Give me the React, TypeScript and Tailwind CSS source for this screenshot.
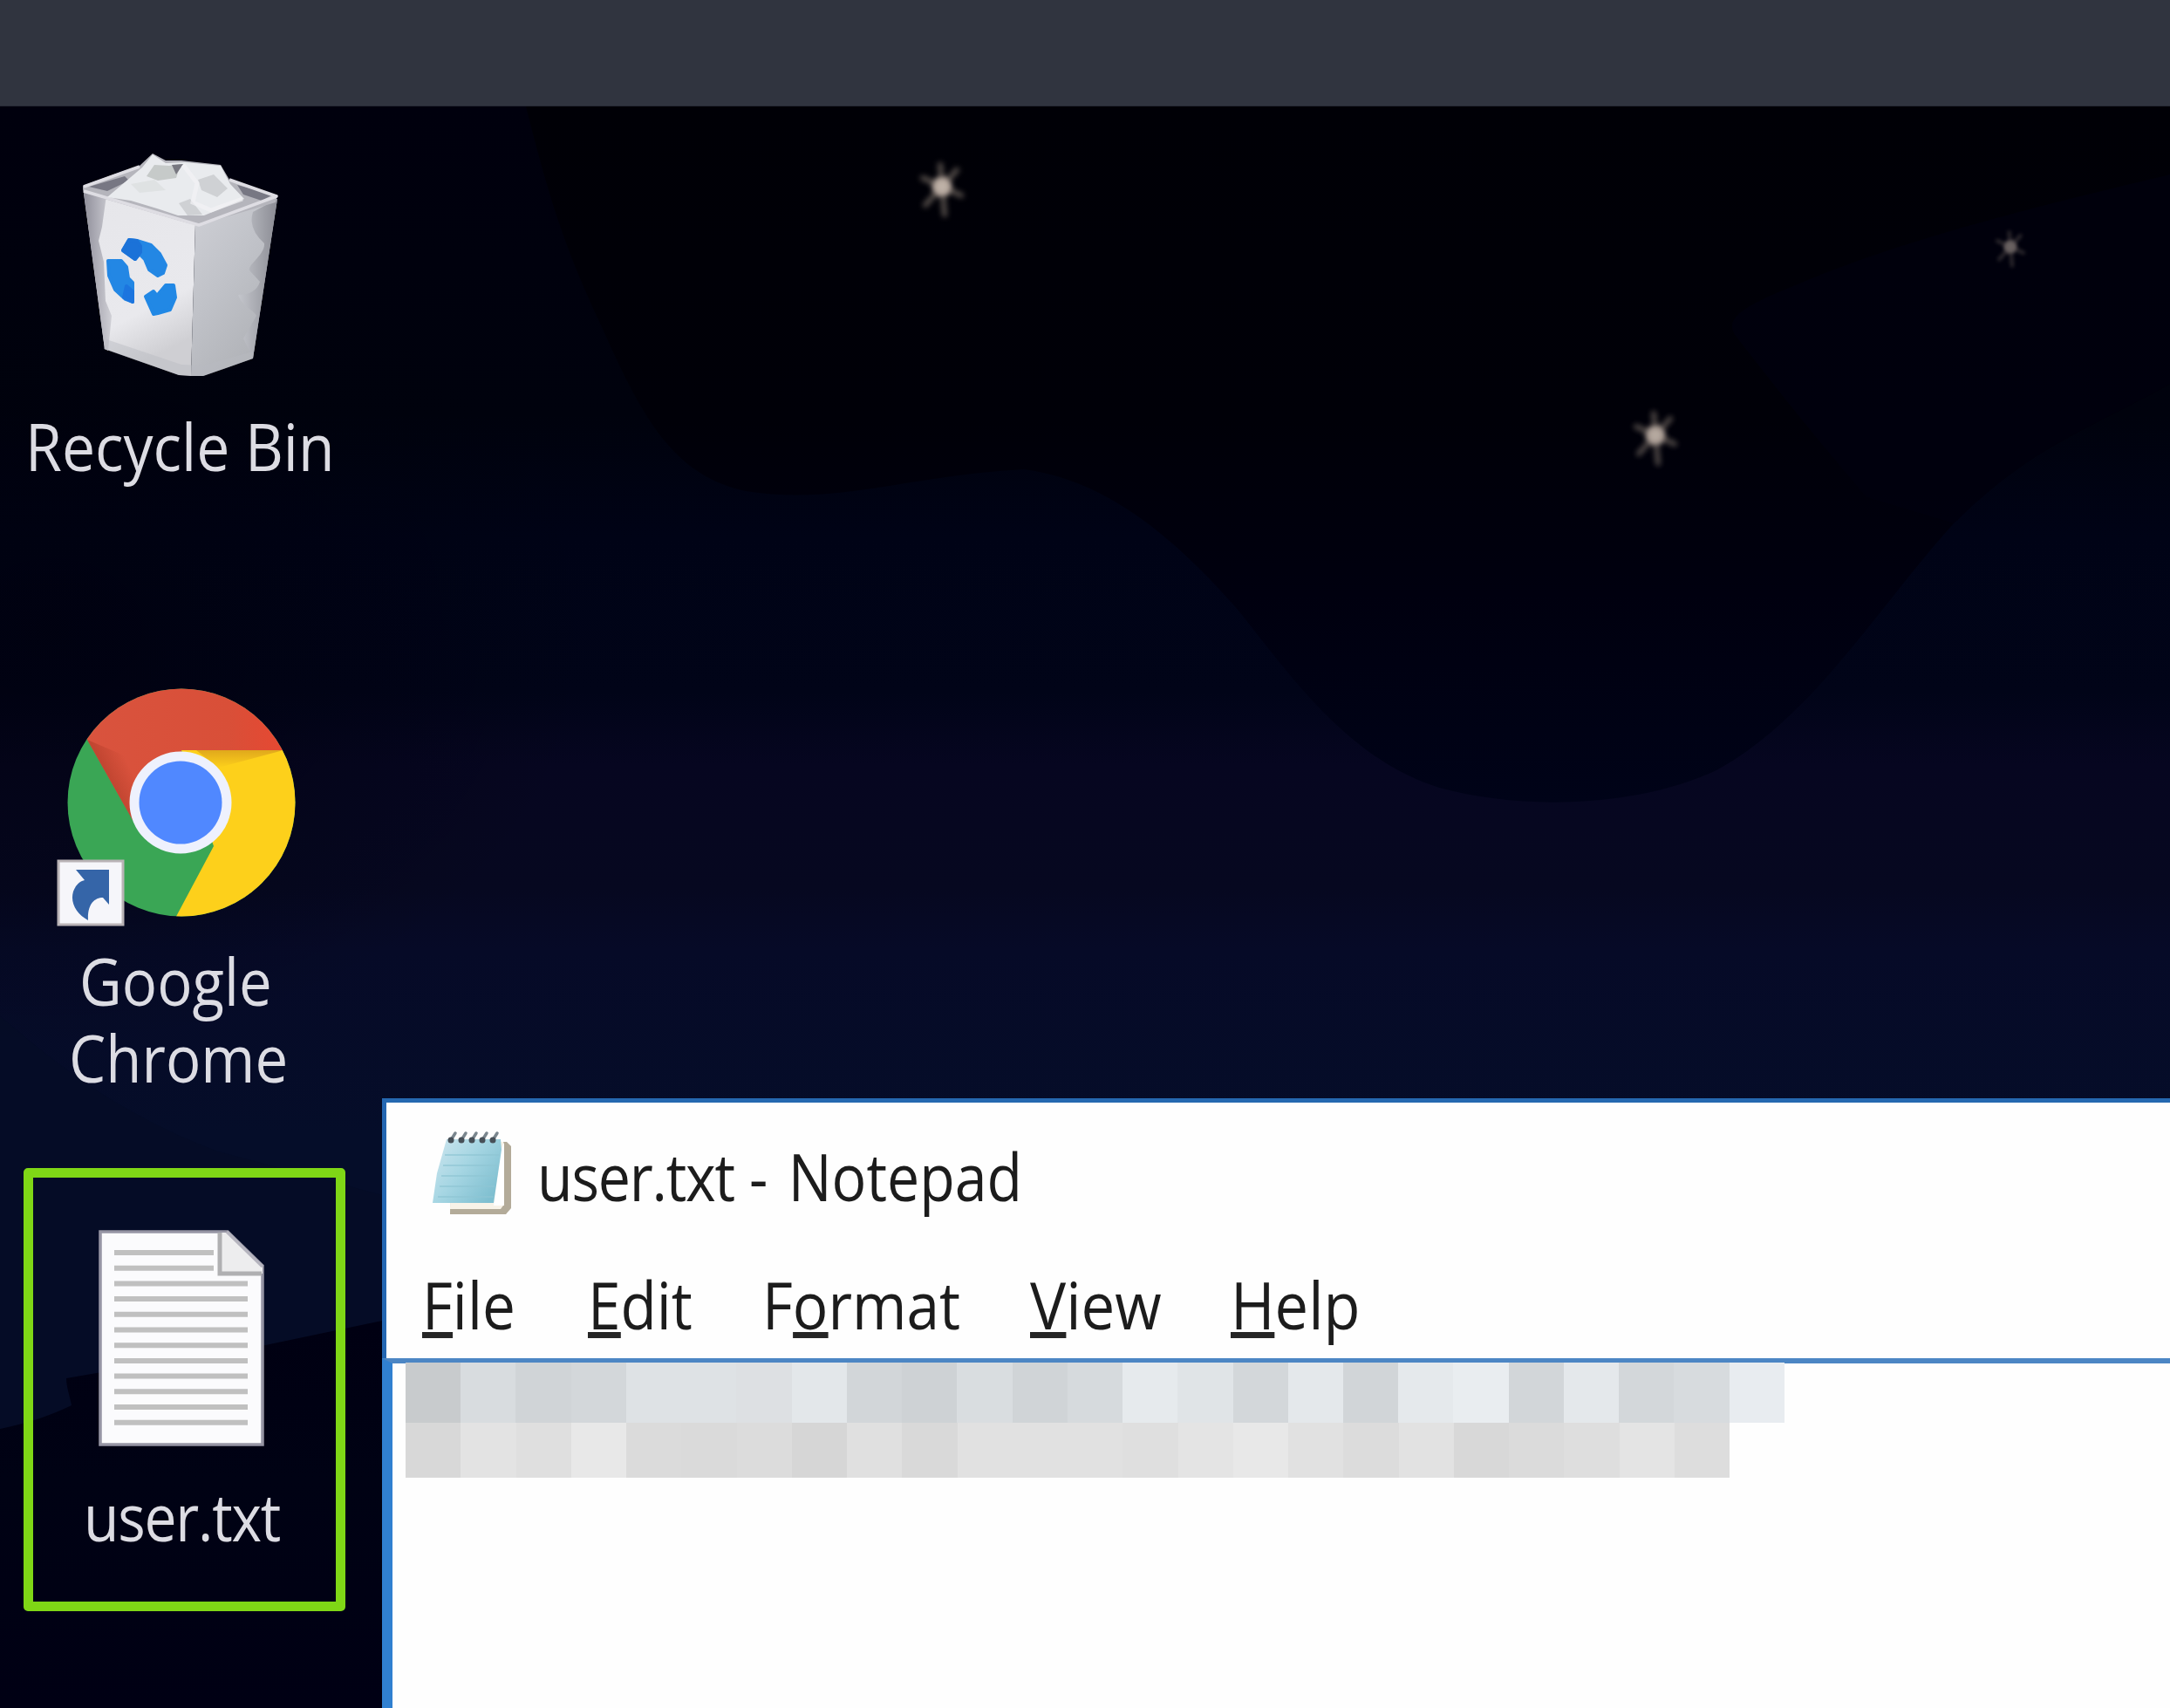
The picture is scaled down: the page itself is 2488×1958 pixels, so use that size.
import type { ReactNode } from "react";

const ROW_ONE = [
  "#c8cbcd", "#d8dcdf", "#d0d4d7", "#d3d7da", "#dee2e5", "#dee2e5", "#dde0e3", "#e3e7ea", "#d2d6d9",
  "#ced2d5", "#d9dde0", "#d0d4d7", "#d6dadd", "#e6eaed", "#e0e4e7", "#d3d7da", "#e4e8eb", "#d1d5d8",
  "#e5e9ec", "#e9edf0", "#d2d6d9", "#e4e8eb", "#d3d7da", "#d7dbde", "#e8ecf0",
];

const ROW_TWO = [
  "#d8d8d8", "#e3e3e3", "#dfdfdf", "#e8e8e8", "#dbdbdb", "#dadada", "#dcdcdc", "#d6d6d6", "#e0e0e0",
  "#d9d9d9", "#e1e1e1", "#e1e1e1", "#e1e1e1", "#dfdfdf", "#e4e4e4", "#e8e8e8", "#e1e1e1", "#dcdcdc",
  "#e2e2e2", "#d8d8d8", "#dbdbdb", "#dedede", "#e4e4e4", "#dddddd",
];

function Label({ className, children }: { className: string; children: ReactNode }) {
  return (
    <span className={`block w-max shrink-0 origin-left whitespace-nowrap text-[75px] leading-[88px] ${className}`}>
      {children}
    </span>
  );
}

function Key({ children }: { children: string }) {
  return (
    <span className="relative">
      {children}
      <span className="absolute inset-x-0 bottom-[12px] h-[7px] bg-[#262626]" />
    </span>
  );
}

function Star({ x, y, size, opacity }: { x: number; y: number; size: number; opacity: number }) {
  return (
    <g transform={`translate(${x} ${y}) scale(${size})`} opacity={opacity}>
      <g stroke="#8f8378" strokeWidth="6" strokeLinecap="round" opacity="0.6" filter="url(#soft)">
        <path d="M-2-25 3 32M-22-10 22 10M17-19-19 21" />
      </g>
      <circle r="11" fill="#b0a299" filter="url(#soft)" />
      <circle r="6" fill="#c2b5aa" filter="url(#soft)" />
    </g>
  );
}

function NightSky() {
  return (
    <svg className="absolute inset-0" width="2488" height="1836" viewBox="0 122 2488 1836">
      <defs>
        <filter id="soft" x="-100%" y="-100%" width="300%" height="300%">
          <feGaussianBlur stdDeviation="3" />
        </filter>
        <linearGradient id="sky" gradientUnits="userSpaceOnUse" x1="0" y1="122" x2="0" y2="1300">
          <stop offset="0" stopColor="#00000d" />
          <stop offset="0.3" stopColor="#00020d" />
          <stop offset="0.42" stopColor="#000316" />
          <stop offset="0.57" stopColor="#010418" />
          <stop offset="0.64" stopColor="#060620" />
          <stop offset="0.76" stopColor="#060820" />
          <stop offset="0.82" stopColor="#060a27" />
          <stop offset="1" stopColor="#050d29" />
        </linearGradient>
        <linearGradient id="valley" gradientUnits="userSpaceOnUse" x1="0" y1="122" x2="0" y2="920">
          <stop offset="0" stopColor="#000006" />
          <stop offset="0.45" stopColor="#000008" />
          <stop offset="0.7" stopColor="#00000f" />
          <stop offset="1" stopColor="#000318" />
        </linearGradient>
        <radialGradient id="shade" gradientUnits="userSpaceOnUse" cx="0" cy="0" r="1" gradientTransform="translate(60 720) scale(620 480)">
          <stop offset="0" stopColor="#00000c" stopOpacity="0.6" />
          <stop offset="1" stopColor="#00000c" stopOpacity="0" />
        </radialGradient>
        <linearGradient id="ground" gradientUnits="userSpaceOnUse" x1="0" y1="1520" x2="0" y2="1958">
          <stop offset="0" stopColor="#000012" />
          <stop offset="0.4" stopColor="#000214" />
          <stop offset="1" stopColor="#000014" />
        </linearGradient>
      </defs>
      <path d="M0 122H2488V1958H0Z" fill="url(#sky)" />
      <path d="M0 122H700V1260H0Z" fill="url(#shade)" />
      <path
        d="M603 122C635 250 655 300 690 375C735 475 770 545 855 563C960 580 1040 545 1174 538C1270 550 1350 620 1420 700C1480 775 1545 870 1650 903C1750 930 1880 925 1970 882C2080 820 2150 700 2240 600C2330 510 2400 490 2488 440V122Z"
        fill="url(#valley)"
      />
      <path d="M2488 200C2340 235 2180 275 2063 325C2000 350 1975 365 1990 385C2040 450 2080 500 2140 570L2240 600C2330 510 2400 490 2488 440Z" fill="#00000f" opacity="0.75" />
      <path d="M0 1165C60 1215 130 1275 250 1320L438 1370V1520L0 1640Z" fill="#050c26" opacity="0.8" />
      <path d="M0 1638C30 1632 60 1622 82 1611C80 1600 76 1590 76 1580L180 1562 290 1545 438 1514V1958H0Z" fill="url(#ground)" />
      <Star x={1080} y={214} size={1} opacity={1} />
      <Star x={1898} y={499} size={1} opacity={0.95} />
      <Star x={2305} y={283} size={0.68} opacity={0.55} />
    </svg>
  );
}

function RecycleBinIcon() {
  return (
    <svg className="ml-[90px] block shrink-0" width="240" height="270" viewBox="90 170 240 270">
      <defs>
        <linearGradient id="binFront" x1="0" y1="0" x2="0.3" y2="1">
          <stop offset="0" stopColor="#e6e6ea" />
          <stop offset="0.75" stopColor="#e9e9ed" />
          <stop offset="1" stopColor="#cfcfd3" />
        </linearGradient>
        <linearGradient id="binSide" x1="0" y1="0" x2="0.6" y2="1">
          <stop offset="0" stopColor="#cfd0d6" />
          <stop offset="0.5" stopColor="#c0c2c8" />
          <stop offset="1" stopColor="#b0b2b7" />
        </linearGradient>
        <linearGradient id="binGlass" x1="0" y1="0" x2="1" y2="0">
          <stop offset="0" stopColor="#8d8c98" />
          <stop offset="1" stopColor="#d0d0d6" />
        </linearGradient>
        <linearGradient id="binEdge" x1="0" y1="0" x2="1" y2="0">
          <stop offset="0" stopColor="#c4c6cc" />
          <stop offset="1" stopColor="#8a8b93" />
        </linearGradient>
      </defs>
      <path d="M95 214 224 256 219 431 205 430 120 400Z" fill="url(#binFront)" />
      <path d="M95 214 122 224 117 260 113 276 119 300 121 345 128 362 124 402 120 400Z" fill="url(#binGlass)" />
      <path d="M224 256 318 228 290 411 233 431 219 431Z" fill="url(#binSide)" />
      <path d="M318 228 290 243Q284 262 303 279C304 292 284 303 286 310L298 323Q293 338 273 338C278 352 292 356 294 362L279 388 290 411Z" fill="url(#binEdge)" />
      <path d="M119 400 205 430 233 431 290 411 290 403 232 419 208 418 122 389Z" fill="#b9bac0" opacity="0.45" />
      <path d="M95 213C130 200 145 195 160 190L175 176 190 184 208 184 253 189 263 206 318 224 316 232 228 258 216 256 96 221Z" fill="#b5b5bc" />
      <path d="M102 214 143 202 148 207 123 219ZM272 212 313 223 300 230 279 223Z" fill="#777783" />
      <path d="M96 214 160 191M263 206 317 225 228 258 96 219" fill="none" stroke="#deddE3" strokeWidth="3.5" strokeLinejoin="round" />
      <path d="M123 226 150 203 163 192 175 177 190 187 212 186 253 190 264 211 280 228 234 247 204 247 180 239 150 230Z" fill="#e9ebee" />
      <path d="M168 202 177 189 194 190 207 188 202 204 181 207Z" fill="#c6cac9" />
      <path d="M197 189 210 188 202 200Z" fill="#777780" />
      <path d="M227 206 245 200 261 216 249 226 231 218ZM205 233 218 228 232 246 215 247Z" fill="#cfd1d4" />
      <path d="M150 211 177 206 190 218 160 221Z" fill="#dfe2e3" />
      <path d="M210 189 226 210 221 232 242 241 278 228" fill="none" stroke="#f2f2f5" strokeWidth="5" opacity="0.7" />
      <g strokeWidth="4" strokeLinejoin="round">
        <path d="M141 287 148 275 157 276 173 281 183 291 190 304 187 313 181 316 171 309 166 297 160 291 155 297Z" fill="#2387e4" stroke="#2387e4" />
        <path d="M141 287 148 275 157 276 161 282 161 289 155 297Z" fill="#1b72d8" stroke="#1b72d8" />
        <path d="M124 299 139 299 145 306 147 319 152 324 152 346 144 343 132 332 125 316Z" fill="#2387e4" stroke="#2387e4" />
        <path d="M145 328 152 334 152 346 142 341Z" fill="#1c75df" stroke="#1c75df" />
        <path d="M167 340 176 334 180 339 190 327 199 327 201 341 195 355 181 359 176 360Z" fill="#2188e5" stroke="#2188e5" />
      </g>
    </svg>
  );
}

function ChromeIcon() {
  return (
    <svg className="ml-[60px] block shrink-0" width="285" height="285" viewBox="60 785 285 285">
      <defs>
        <linearGradient id="redShade" x1="0" y1="0" x2="1" y2="0">
          <stop offset="0" stopColor="#d9543f" />
          <stop offset="0.7" stopColor="#d94f38" />
          <stop offset="1" stopColor="#ea4630" />
        </linearGradient>
        <linearGradient id="yellowShade" x1="0" y1="0" x2="0" y2="1">
          <stop offset="0" stopColor="#e0a81c" />
          <stop offset="1" stopColor="#fdd01b" />
        </linearGradient>
        <linearGradient id="redFold" gradientUnits="userSpaceOnUse" x1="124" y1="890" x2="148" y2="878">
          <stop offset="0" stopColor="#b8402c" stopOpacity="0.7" />
          <stop offset="1" stopColor="#b8402c" stopOpacity="0" />
        </linearGradient>
        <clipPath id="disc">
          <circle cx="208" cy="920" r="130.5" />
        </clipPath>
      </defs>
      <g clipPath="url(#disc)">
        <path d="M70 780H350V1070H70Z" fill="#3aa655" />
        <path d="M70 795 100 848 152 940 208 920 208 860H345V780H70Z" fill="url(#redShade)" />
        <path d="M100 848 152 940 175 880Z" fill="url(#redFold)" />
        <path d="M208 860H345V1060H197L245 970Z" fill="#fdd01b" />
        <path d="M225 860H325L250 880Z" fill="url(#yellowShade)" />
      </g>
      <circle cx="207" cy="920" r="58.5" fill="#eef1fd" />
      <circle cx="207" cy="920" r="47.5" fill="#5088ff" />
      <path d="M67 987H141V1060H67Z" fill="#f6f6fa" stroke="#b9b3b6" strokeWidth="3" />
      <path d="M87 997H125V1037L118 1029C108 1029 100 1037 101 1055C88 1048 80 1035 84 1022C87 1014 92 1010 97 1009Z" fill="#3565a8" />
    </svg>
  );
}

function TextFileIcon() {
  return (
    <svg className="ml-[70px] mt-[53px] block shrink-0" width="200" height="260" viewBox="108 1403 200 260">
      <path d="M115 1412H261L301 1451V1656H115Z" fill="#fbfbfd" stroke="#9695a4" strokeWidth="3.500" />
      <path
        d="M131 1436H245M131 1453.700H245M131 1471.400H284M131 1489.100H284M131 1506.800H284M131 1524.500H284M131 1542.200H284M131 1559.900H284M131 1577.600H284M131 1595.300H284M131 1613H284M131 1630.700H284"
        stroke="#c0c0c0"
        strokeWidth="6"
      />
      <path d="M252 1413H261L301 1451V1460H252Z" fill="#ededee" />
      <path d="M252 1413V1460H300" fill="none" stroke="#b0b0b2" strokeWidth="5" />
      <path d="M260 1412 301 1452" stroke="#b5b4be" strokeWidth="3.500" />
    </svg>
  );
}

function NotepadIcon() {
  return (
    <svg className="block shrink-0" width="100" height="104" viewBox="490 1292 100 104">
      <defs>
        <linearGradient id="pad" x1="0" y1="0" x2="1" y2="0.7">
          <stop offset="0" stopColor="#cfe6ef" />
          <stop offset="0.5" stopColor="#a6d6e3" />
          <stop offset="1" stopColor="#7fbfd0" />
        </linearGradient>
      </defs>
      <path d="M517 1309H581L586 1314V1385L580 1392H516Z" fill="#b3ab99" />
      <path d="M517 1309H577V1382L574 1386H516Z" fill="#f8f3e8" />
      <path d="M574 1320 578 1309V1382H566Z" fill="#ffffff" />
      <path d="M512 1306H574L575 1318 566 1379H496L501 1345Z" fill="url(#pad)" />
      <path d="M510 1324H572M508 1336H570M506 1348H568M504 1360H567M502 1372H566" stroke="#8fc6d4" strokeWidth="2" opacity="0.65" />
      <g stroke="#7a868e" strokeWidth="3.500" strokeLinecap="round">
        <path d="M517 1307 522 1299M529 1307 534 1299M541 1307 546 1299M553 1307 558 1299M565 1307 570 1299" />
      </g>
      <g fill="#475058">
        <circle cx="517" cy="1307" r="3.500" />
        <circle cx="529" cy="1307" r="3.500" />
        <circle cx="541" cy="1307" r="3.500" />
        <circle cx="553" cy="1307" r="3.500" />
        <circle cx="565" cy="1307" r="3.500" />
      </g>
    </svg>
  );
}

function Mosaic({ colors, className }: { colors: string[]; className: string }) {
  return (
    <div className={`flex ${className}`}>
      {colors.map((color, i) => (
        <div key={i} className="flex-1" style={{ backgroundColor: color }} />
      ))}
    </div>
  );
}

function NotepadWindow() {
  return (
    <section className="absolute left-[438px] top-[1137px] flex h-[699px] w-[2050px] flex-col text-[#1c1c1c]">
      <div className="h-[298px] shrink-0 border-l-[5px] border-t-[5px] border-l-[#2467b2] border-t-[#2568b0] bg-[#fefefe]">
        <header className="flex h-[130px] items-start pl-[47px] pt-[28px]">
          <NotepadIcon />
          <Label className="ml-[26px] mt-[12px] scale-x-[0.883]">
            <span className="tracking-[-1.400px]">user.txt</span> - <span className="ml-[7px]">Notepad</span>
          </Label>
        </header>
        <nav className="grid grid-cols-[190px_200px_307.400px_229.500px_1fr] pl-[41px] pt-[57px]">
          <Label className="scale-x-[0.900]"><Key>F</Key>ile</Label>
          <Label className="scale-x-[0.900]"><Key>E</Key>dit</Label>
          <Label className="scale-x-[0.900]">F<Key>o</Key>rmat</Label>
          <Label className="scale-x-[0.920]"><Key>V</Key>iew</Label>
          <Label className="scale-x-[0.915]"><Key>H</Key>elp</Label>
        </nav>
      </div>
      <div className="min-h-0 flex-1 border-l-[12px] border-t-[6px] border-l-[#3080d0] border-t-[#4c86c4] bg-[#fefefe]">
        <div className="-mt-px ml-[15px] flex flex-col">
          <Mosaic colors={ROW_ONE} className="h-[69px] w-[1581px]" />
          <Mosaic colors={ROW_TWO} className="h-[63px] w-[1518px]" />
        </div>
      </div>
    </section>
  );
}

export default function App() {
  return (
    <div className="flex h-[1958px] w-[2488px] flex-col overflow-hidden bg-[#000010] font-['Open_Sans',sans-serif]">
      <div className="h-[123px] shrink-0 border-b-2 border-[#262934] bg-[#30343f]" />
      <main className="relative -mt-px flex-1 overflow-hidden">
        <NightSky />
        <div className="relative flex w-[437px] flex-col pt-[48px] text-[#dcdce3]">
          <RecycleBinIcon />
          <Label className="ml-[29px] mt-[27px] scale-x-[0.905]">Recycle Bin</Label>
          <div className="mt-[230px]">
            <ChromeIcon />
            <Label className="ml-[91px] mt-[10px] scale-x-[0.895]">Google</Label>
            <Label className="ml-[79px] scale-x-[0.895]">Chrome</Label>
          </div>
          <div className="ml-[27px] mt-[83px] h-[508px] w-[369px] rounded-[5px] border-[11px] border-[#7fd716]">
            <TextFileIcon />
            <Label className="ml-[58px] mt-[31px] scale-x-[0.880] tracking-[-1.400px]">user.txt</Label>
          </div>
        </div>
        <NotepadWindow />
      </main>
    </div>
  );
}
